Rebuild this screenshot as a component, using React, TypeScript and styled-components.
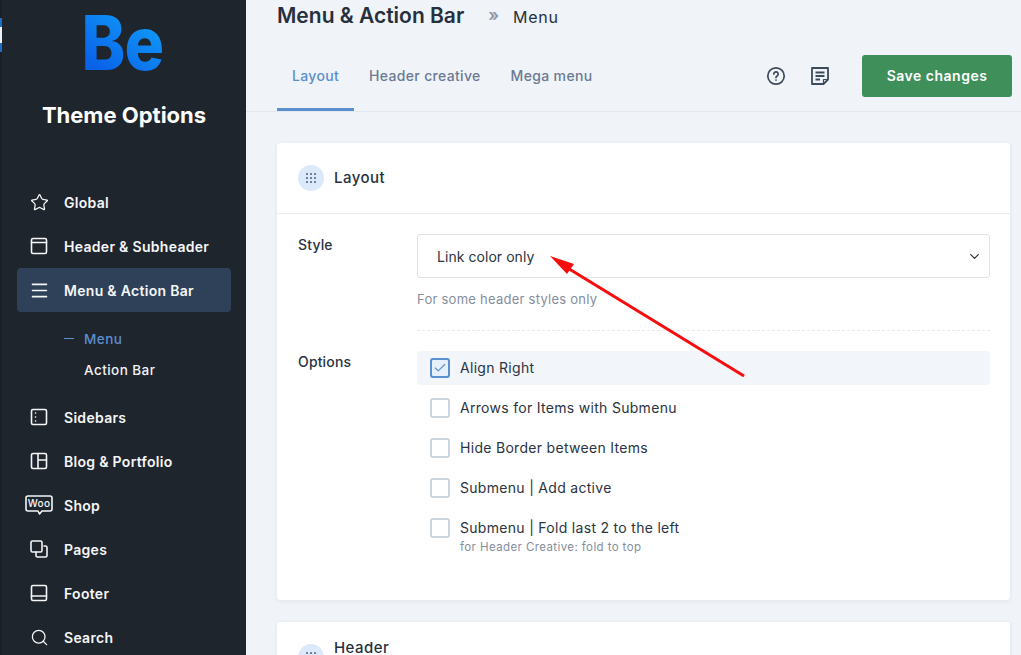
import styled, { createGlobalStyle } from 'styled-components';
import { Star, Menu as MenuIcon, Search, ChevronDown, Check } from 'lucide-react';

const GlobalStyle = createGlobalStyle`
  html, body {
    margin: 0;
    height: 100%;
    overflow: hidden;
    background: #f0f3f8;
    font-family: Inter, "Noto Sans", sans-serif;
  }
  * { box-sizing: border-box; }
`;

// STYLES
const Page = styled.div`
  display: flex;
  width: 1021px;
  height: 655px;
  overflow: hidden;
  position: relative;
`;

const Edge = styled.div`
  width: 2px;
  flex: none;
  background: #1b2026;
  padding-top: 18px;
`;

const EdgeMark = styled.div`
  height: 34px;
  background: linear-gradient(#1f6fc4 0 9px, #eef1f4 9px 25px, #1f6fc4 25px);
`;

const Sidebar = styled.aside`
  width: 244px;
  flex: none;
  background: #1f252d;
  display: flex;
  flex-direction: column;
  padding: 0 15px;
`;

const Logo = styled.div`
  height: 88px;
  flex: none;
  display: flex;
  justify-content: center;
  align-items: flex-start;
`;

const LogoText = styled.span`
  font-family: Inter, sans-serif;
  font-weight: 800;
  font-size: 75px;
  line-height: 86px;
  letter-spacing: -1px;
  margin-left: -3px;
  transform: scaleX(0.88);
  background: linear-gradient(30deg, #0a62e8 20%, #109ffa 85%);
  -webkit-background-clip: text;
  background-clip: text;
  color: transparent;
`;

const SideTitle = styled.div`
  margin-top: 12px;
  flex: none;
  text-align: center;
  font-size: 22px;
  line-height: 30px;
  font-weight: 700;
  color: #fff;
  letter-spacing: 0;
`;

const Nav = styled.nav`
  margin-top: 50px;
  flex: none;
  display: flex;
  flex-direction: column;
`;

const NavItem = styled.div<{ $active?: boolean }>`
  height: 44px;
  width: 214px;
  display: flex;
  align-items: center;
  border-radius: 4px;
  font-size: 14px;
  font-weight: 600;
  letter-spacing: 0.3px;
  color: #f4f6f8;
  background: ${(p) => (p.$active ? '#2f4158' : 'transparent')};
`;

const NavIcon = styled.span`
  width: 47px;
  padding-right: 3px;
  flex: none;
  display: flex;
  justify-content: center;
  svg { display: block; }
`;

const SubNav = styled.div`
  display: flex;
  flex-direction: column;
  padding: 11px 0 10px 47px;
`;

const SubItem = styled.div<{ $active?: boolean }>`
  height: 31px;
  display: flex;
  align-items: center;
  gap: 10px;
  font-size: 13.5px;
  font-weight: 500;
  letter-spacing: 0.45px;
  color: ${(p) => (p.$active ? '#5a8fd0' : '#f0f2f5')};
  padding-left: ${(p) => (p.$active ? '0' : '20px')};
`;

const Dash = styled.span`
  width: 10px;
  height: 1px;
  background: #5a8fd0;
`;

const Main = styled.main`
  flex: 1;
  min-width: 0;
  display: flex;
  flex-direction: column;
`;

const TopBar = styled.header`
  height: 112px;
  flex: none;
  border-bottom: 1px solid #e3e7ee;
  padding: 0 9px 0 31px;
  display: flex;
  flex-direction: column;
`;

const Crumbs = styled.div`
  height: 32px;
  padding-bottom: 2px;
  display: flex;
  align-items: center;
  color: #26303e;
`;

const Title = styled.h1`
  margin: 0;
  font-size: 21px;
  font-weight: 600;
`;

const Sep = styled.span`
  margin: 0 14px 0 24px;
  color: #8b96a6;
  font-size: 17px;
  font-weight: 600;
`;

const Crumb = styled.span`
  padding-top: 3px;
  font-size: 16px;
  font-weight: 400;
  letter-spacing: 0.75px;
`;

const TabRow = styled.div`
  flex: 1;
  display: flex;
  align-items: stretch;
`;

const Tab = styled.div<{ $active?: boolean }>`
  display: flex;
  align-items: center;
  padding: 10px 15px 0;
  font-size: 14px;
  font-weight: 500;
  letter-spacing: 0.33px;
  color: ${(p) => (p.$active ? '#5a8fd0' : '#6b7a92')};
  border-bottom: 3px solid ${(p) => (p.$active ? '#5a8fd0' : 'transparent')};
`;

const Actions = styled.div`
  margin-left: auto;
  display: flex;
  align-items: center;
  height: 66px;
  margin-top: 11px;
`;

const IconButton = styled.button`
  border: 0;
  padding: 0;
  background: none;
  width: 20px;
  height: 20px;
  margin-right: 24px;
  color: #3d4a5c;
  svg { display: block; }
`;

const SaveButton = styled.button`
  width: 150px;
  height: 42px;
  margin-left: 8px;
  padding: 0 0 2px;
  border: 0;
  border-radius: 3px;
  background: #3f8f5b;
  color: #fff;
  font-family: inherit;
  font-size: 14px;
  font-weight: 600;
  letter-spacing: 0.5px;
`;

const Content = styled.div`
  padding: 31px 11px 0 31px;
  display: flex;
  flex-direction: column;
  gap: 22px;
`;

const Card = styled.section`
  background: #fff;
  border-radius: 3px;
  box-shadow: 0 1px 4px rgba(40, 60, 90, 0.08);
  flex: none;
`;

const CardHeader = styled.div`
  height: 71px;
  display: flex;
  align-items: center;
  gap: 10px;
  padding-left: 21px;
  border-bottom: 1px solid #e8ebf0;
`;

const Dots = styled.span`
  width: 26px;
  height: 26px;
  border-radius: 50%;
  background: #dbe9fb;
  display: flex;
  align-items: center;
  justify-content: center;
  color: #667b98;
`;

const CardTitle = styled.h2<{ $lift?: boolean }>`
  margin: 0 0 ${(p) => (p.$lift ? '19px' : '2px')};
  font-size: 15px;
  font-weight: 500;
  letter-spacing: 0.45px;
  color: #26303e;
`;

const Row = styled.div<{ $top?: number; $bottom?: number }>`
  display: grid;
  grid-template-columns: 119px 573px;
  padding: ${(p) => p.$top ?? 0}px 0 ${(p) => p.$bottom ?? 0}px 21px;
`;

const Label = styled.div`
  padding-top: 2px;
  font-size: 14px;
  font-weight: 500;
  letter-spacing: 0.15px;
  color: #2a3442;
`;

const SelectBox = styled.div`
  height: 44px;
  border: 1px solid #e0e4ea;
  border-radius: 3px;
  display: flex;
  align-items: center;
  justify-content: space-between;
  padding: 0 7px 0 19px;
  font-size: 14px;
  letter-spacing: 0.05px;
  color: #2a3442;
`;

const Help = styled.div`
  margin-top: 13px;
  font-size: 13px;
  letter-spacing: 0.25px;
  color: #848e9c;
`;

const Divider = styled.div`
  margin: 23px 0 20px 140px;
  width: 573px;
  border-top: 1px dashed #e6e9ee;
`;

const Checks = styled.div`
  display: flex;
  flex-direction: column;
  gap: 6px;
`;

const CheckRow = styled.div<{ $on?: boolean }>`
  min-height: 34px;
  display: flex;
  align-items: flex-start;
  gap: 10px;
  padding: 7px 13px 0;
  border-radius: 3px;
  background: ${(p) => (p.$on ? '#f2f5fa' : 'transparent')};
`;

const Box = styled.span<{ $on?: boolean }>`
  width: 20px;
  height: 20px;
  flex: none;
  border-radius: 3px;
  border: 2px solid ${(p) => (p.$on ? '#5a8fd0' : '#cbd5e1')};
  background: ${(p) => (p.$on ? '#e6effa' : '#fff')};
  color: #5a8fd0;
  display: flex;
  align-items: center;
  justify-content: center;
`;

const CheckText = styled.div`
  font-size: 14px;
  line-height: 19px;
  letter-spacing: 0.3px;
  color: #2a3442;
`;

const CheckSub = styled.div`
  margin-top: 3px;
  font-size: 11.5px;
  line-height: 15px;
  letter-spacing: 0.4px;
  color: #848e9c;
`;

const Arrow = styled.svg`
  position: absolute;
  left: 0;
  top: 0;
  pointer-events: none;
`;

// ICONS
const line = { fill: 'none', stroke: 'currentColor', strokeWidth: 1.6, strokeLinecap: 'round', strokeLinejoin: 'round' } as const;

const HeaderIcon = () => (
  <svg width="18" height="18" viewBox="0 0 18 18" {...line}>
    <rect x="1.5" y="1.5" width="15" height="15" rx="1.5" />
    <path d="M1.5 5.5h15" />
  </svg>
);
const SidebarIcon = () => (
  <svg width="18" height="18" viewBox="0 0 18 18" {...line}>
    <rect x="1.5" y="1.5" width="15" height="15" rx="1.5" />
    <path d="M5.5 5h.1M5.5 9h.1M5.5 13h.1" />
  </svg>
);
const BlogIcon = () => (
  <svg width="18" height="18" viewBox="0 0 18 18" {...line}>
    <rect x="1.5" y="1.5" width="15" height="15" rx="1.5" />
    <path d="M8 1.5v15M8 8h8.5" />
  </svg>
);
const WooIcon = () => (
  <svg width="28" height="22" viewBox="0 0 28 22" style={{ marginTop: 2 }}>
    <path {...line} d="M3 1h22a2 2 0 0 1 2 2v11a2 2 0 0 1-2 2h-8l-2.500 3-1.500-3H3a2 2 0 0 1-2-2V3a2 2 0 0 1 2-2z" />
    <text x="14" y="12" textAnchor="middle" fontFamily="Inter, sans-serif" fontSize="10" fontWeight="500" fill="currentColor">Woo</text>
  </svg>
);
const PagesIcon = () => (
  <svg width="18" height="18" viewBox="0 0 18 18" {...line}>
    <rect x="1" y="1" width="11" height="11" rx="1.5" />
    <path d="M14 6h1.500A1.500 1.500 0 0 1 17 7.500v8a1.500 1.500 0 0 1-1.500 1.500h-8A1.500 1.500 0 0 1 6 15.500V12" />
  </svg>
);
const FooterIcon = () => (
  <svg width="18" height="18" viewBox="0 0 18 18" {...line}>
    <rect x="1.500" y="1.500" width="15" height="15" rx="1.500" />
    <path d="M1.500 12h15" />
  </svg>
);
const HelpIcon = () => (
  <svg width="20" height="20" viewBox="0 0 20 20" fill="none" stroke="currentColor" strokeWidth="1.700" strokeLinecap="round">
    <circle cx="10" cy="10" r="8.200" />
    <path d="M7.800 8a2.200 2.200 0 1 1 3.300 1.900c-.7.400-1.100.8-1.100 1.600" />
    <path d="M10 14.100h.01" />
  </svg>
);
const NotesIcon = () => (
  <svg width="20" height="20" viewBox="0 0 20 20" fill="none" stroke="currentColor" strokeWidth="1.800" strokeLinejoin="round">
    <path d="M2 2h16v11.500L13.500 18H2z" />
    <path d="M5.500 6.500h9M5.500 10h9M5.500 13.500h4.500" />
    <path d="M13.500 18v-4.500H18" strokeWidth="1.200" />
  </svg>
);
const GridDots = () => (
  <svg width="12" height="12" viewBox="0 0 12 12" fill="currentColor">
    {[2, 6, 10].flatMap((y) =>
      [2, 6, 10].map((x) => <rect key={`${x}-${y}`} x={x - 1} y={y - 1} width="2" height="2" rx="0.500" />),
    )}
  </svg>
);

const navTop = [
  { name: 'Global', icon: <Star size={19} strokeWidth={1.6} /> },
  { name: 'Header & Subheader', icon: <HeaderIcon /> },
];
const navBottom = [
  { name: 'Sidebars', icon: <SidebarIcon /> },
  { name: 'Blog & Portfolio', icon: <BlogIcon /> },
  { name: 'Shop', icon: <WooIcon /> },
  { name: 'Pages', icon: <PagesIcon /> },
  { name: 'Footer', icon: <FooterIcon /> },
  { name: 'Search', icon: <Search size={19} strokeWidth={1.6} /> },
];
const options = [
  { label: 'Align Right', on: true },
  { label: 'Arrows for Items with Submenu' },
  { label: 'Hide Border between Items' },
  { label: 'Submenu | Add active' },
  { label: 'Submenu | Fold last 2 to the left', sub: 'for Header Creative: fold to top' },
];

export default function App() {
  return (
    <Page>
      <GlobalStyle />
      <Edge>
        <EdgeMark />
      </Edge>
      <Sidebar>
        <Logo>
          <LogoText>Be</LogoText>
        </Logo>
        <SideTitle>Theme Options</SideTitle>
        <Nav>
          {navTop.map((item) => (
            <NavItem key={item.name}>
              <NavIcon>{item.icon}</NavIcon>
              {item.name}
            </NavItem>
          ))}
          <NavItem $active>
            <NavIcon>
              <MenuIcon size={21} strokeWidth={1.8} />
            </NavIcon>
            Menu &amp; Action Bar
          </NavItem>
          <SubNav>
            <SubItem $active>
              <Dash />
              Menu
            </SubItem>
            <SubItem>Action Bar</SubItem>
          </SubNav>
          {navBottom.map((item) => (
            <NavItem key={item.name}>
              <NavIcon>{item.icon}</NavIcon>
              {item.name}
            </NavItem>
          ))}
        </Nav>
      </Sidebar>
      <Main>
        <TopBar>
          <Crumbs>
            <Title>Menu &amp; Action Bar</Title>
            <Sep>»</Sep>
            <Crumb>Menu</Crumb>
          </Crumbs>
          <TabRow>
            <Tab $active>Layout</Tab>
            <Tab>Header creative</Tab>
            <Tab>Mega menu</Tab>
            <Actions>
              <IconButton>
                <HelpIcon />
              </IconButton>
              <IconButton>
                <NotesIcon />
              </IconButton>
              <SaveButton>Save changes</SaveButton>
            </Actions>
          </TabRow>
        </TopBar>
        <Content>
          <Card>
            <CardHeader>
              <Dots>
                <GridDots />
              </Dots>
              <CardTitle>Layout</CardTitle>
            </CardHeader>
            <Row $top={20}>
              <Label>Style</Label>
              <div>
                <SelectBox>
                  Link color only
                  <ChevronDown size={15} strokeWidth={2} />
                </SelectBox>
                <Help>For some header styles only</Help>
              </div>
            </Row>
            <Divider />
            <Row $bottom={45}>
              <Label>Options</Label>
              <Checks>
                {options.map((o) => (
                  <CheckRow key={o.label} $on={o.on}>
                    <Box $on={o.on}>{o.on && <Check size={14} strokeWidth={2} />}</Box>
                    <CheckText>
                      {o.label}
                      {o.sub && <CheckSub>{o.sub}</CheckSub>}
                    </CheckText>
                  </CheckRow>
                ))}
              </Checks>
            </Row>
          </Card>
          <Card>
            <CardHeader>
              <Dots>
                <GridDots />
              </Dots>
              <CardTitle $lift>Header</CardTitle>
            </CardHeader>
          </Card>
        </Content>
      </Main>
      <Arrow width="1021" height="655" viewBox="0 0 1021 655">
        <path d="M744 376L566 267" stroke="#f70d0d" strokeWidth="3" fill="none" />
        <path d="M550 256L574 264L567 274z" fill="#f70d0d" />
      </Arrow>
    </Page>
  );
}
